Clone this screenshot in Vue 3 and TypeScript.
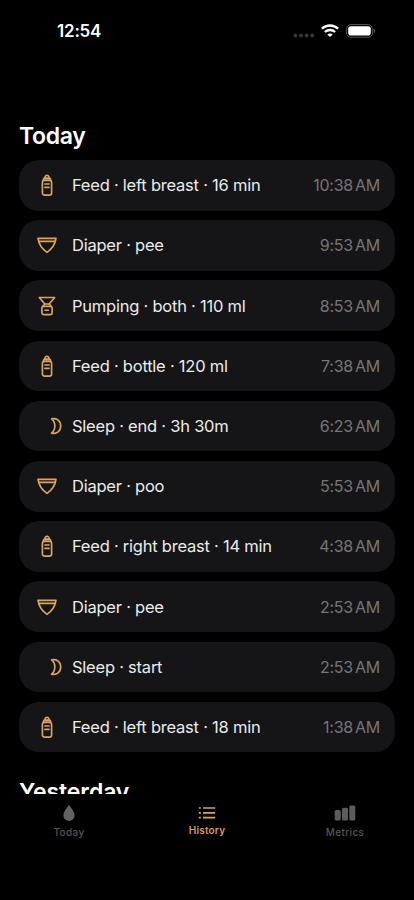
<script setup lang="ts">
type Kind = 'bottle' | 'diaper' | 'pump' | 'moon'

interface Entry {
  kind: Kind
  label: string
  time: string
}

const entries: Entry[] = [
  { kind: 'bottle', label: 'Feed · left breast · 16 min', time: '10:38 AM' },
  { kind: 'diaper', label: 'Diaper · pee', time: '9:53 AM' },
  { kind: 'pump', label: 'Pumping · both · 110 ml', time: '8:53 AM' },
  { kind: 'bottle', label: 'Feed · bottle · 120 ml', time: '7:38 AM' },
  { kind: 'moon', label: 'Sleep · end · 3h 30m', time: '6:23 AM' },
  { kind: 'diaper', label: 'Diaper · poo', time: '5:53 AM' },
  { kind: 'bottle', label: 'Feed · right breast · 14 min', time: '4:38 AM' },
  { kind: 'diaper', label: 'Diaper · pee', time: '2:53 AM' },
  { kind: 'moon', label: 'Sleep · start', time: '2:53 AM' },
  { kind: 'bottle', label: 'Feed · left breast · 18 min', time: '1:38 AM' },
]
</script>

<template>
  <div class="screen">
    <header class="status">
      <span class="clock">12:54</span>
      <div class="indicators">
        <svg class="dots" width="22" height="5" viewBox="0 0 22 5" fill="#38383a">
          <circle cx="2.4" cy="2.5" r="1.9" /><circle cx="8" cy="2.5" r="1.9" />
          <circle cx="13.6" cy="2.5" r="1.9" /><circle cx="19.2" cy="2.5" r="1.9" />
        </svg>
        <svg class="wifi" width="18" height="14" viewBox="0 0 18 14" fill="none" stroke="#fff" stroke-width="2.3">
          <path d="M0.9 4.7C5.4 0.4 12.6 0.4 17.1 4.7" />
          <path d="M3.9 8C6.8 5.3 11.2 5.3 14.1 8" />
          <path d="M9 13.1L6.3 10.5C7.8 9.1 10.2 9.1 11.7 10.5Z" fill="#fff" stroke="none" />
        </svg>
        <svg width="30" height="14" viewBox="0 0 30 14">
          <rect x="0.6" y="0.6" width="25.8" height="12.6" rx="4.2" fill="none" stroke="#59595b" />
          <rect x="2.2" y="2.2" width="22.6" height="9.4" rx="2.8" fill="#fff" />
          <path d="M27.7 4.8Q29.2 5.4 29.2 7T27.7 9.1Z" fill="#59595b" />
        </svg>
      </div>
    </header>

    <main class="history">
      <h1 class="day">Today</h1>
      <ul class="list">
        <li v-for="(entry, i) in entries" :key="i" class="card">
          <span class="icon" :class="{ shifted: entry.kind === 'moon' }">
            <svg v-if="entry.kind === 'bottle'" width="12" height="22" viewBox="0 0 12 22">
              <path d="M2.2 6.2Q2.2 4.2 4 3.4Q4.4 1.2 6 1.2T8 3.4Q9.8 4.2 9.8 6.2Z" />
              <path d="M3.8 4.1H8.2" />
              <rect x="1.4" y="6.3" width="9.2" height="14.8" rx="2.2" />
              <path d="M3.9 10H8.1M3.9 13.4H8.1" />
            </svg>
            <svg v-else-if="entry.kind === 'diaper'" width="20" height="18" viewBox="0 0 20 18">
              <path d="M1 2.4H19C18.2 8 15.4 12.6 10 16.4C4.6 12.6 1.8 8 1 2.4Z" />
              <path d="M1.8 5.4H18.2" />
            </svg>
            <svg v-else-if="entry.kind === 'pump'" width="18" height="20" viewBox="0 0 18 20">
              <path d="M1.3 1.5H16.7L11.2 8H6.8Z" />
              <path d="M6.8 8L4.8 10.3M11.2 8L13.2 10.3" />
              <rect x="3.9" y="10.4" width="10.2" height="8.2" rx="1.8" />
              <path d="M7 14.2H10.4" />
            </svg>
            <svg v-else width="12" height="18" viewBox="0 0 12 18">
              <path d="M1.6 1.9C6 .6 10.7 3.4 10.7 9S6 17.4 1.6 16.1C5.9 12.6 5.9 5.4 1.6 1.9Z" />
            </svg>
          </span>
          <span class="label">{{ entry.label }}</span>
          <time class="time">{{ entry.time }}</time>
        </li>
      </ul>
      <h1 class="day next">Yesterday</h1>
    </main>

    <nav class="tabs">
      <a class="tab">
        <svg width="14" height="18" viewBox="0 0 14 18" fill="#626262">
          <path d="M7 .8C9 4 12.6 7.6 12.6 11.4A5.6 5.6 0 0 1 1.4 11.4C1.4 7.6 5 4 7 .8Z" />
        </svg>
        <span>Today</span>
      </a>
      <a class="tab active">
        <svg width="18" height="18" viewBox="0 0 18 18" fill="none" stroke="#d8a45f" stroke-width="1.7">
          <path d="M.8 4H2.8M.8 8.8H2.8M.8 13.6H2.8M5 4H17.2M5 8.8H17.2M5 13.6H17.2" />
        </svg>
        <span>History</span>
      </a>
      <a class="tab">
        <svg width="22" height="18" viewBox="0 0 22 18" fill="#5c5c5c">
          <rect x=".7" y="6" width="6" height="10.4" rx="1.5" />
          <rect x="8" y="3.8" width="6" height="12.6" rx="1.5" />
          <rect x="15.3" y="1.4" width="6" height="15" rx="1.5" />
        </svg>
        <span>Metrics</span>
      </a>
    </nav>
  </div>
</template>

<style>
body {
  background: #000;
}
</style>

<style scoped>
.screen {
  width: 414px;
  height: 900px;
  display: flex;
  flex-direction: column;
  overflow: hidden;
  background: #000;
  color: #fff;
  font-family: Inter, 'Liberation Sans', sans-serif;
}
.status {
  box-sizing: border-box;
  height: 62px;
  flex: none;
  display: flex;
  justify-content: space-between;
  align-items: center;
  padding: 0 38px 0 57px;
}
.clock {
  font-size: 17px;
  font-weight: 600;
  letter-spacing: -0.2px;
}
.indicators {
  display: flex;
  align-items: center;
}
.dots {
  margin: 9px 6px 0 0;
}
.wifi {
  margin-right: 7px;
}
.history {
  height: 732px;
  flex: none;
  box-sizing: border-box;
  padding: 59px 19px 0;
  overflow: hidden;
}
.day {
  margin: 0;
  height: 39px;
  line-height: 31px;
  font-size: 23px;
  font-weight: 600;
  letter-spacing: -0.3px;
}
.next {
  margin-top: 25px;
  letter-spacing: -0.1px;
}
.list {
  list-style: none;
  margin: 0;
  padding: 0;
  display: flex;
  flex-direction: column;
  gap: 9.6px;
}
.card {
  box-sizing: border-box;
  height: 50.6px;
  display: flex;
  align-items: center;
  padding: 0 15px 0 14px;
  border-radius: 20px;
  background: #151517;
}
.icon {
  width: 27px;
  display: flex;
  justify-content: center;
  margin-right: 12px;
}
.icon svg {
  flex: none;
  fill: none;
  stroke: #d9a560;
  stroke-width: 1.65;
  stroke-linecap: round;
  stroke-linejoin: round;
}
.shifted {
  justify-content: flex-end;
  width: 29px;
  margin-right: 10px;
}
.label {
  flex: 1;
  font-size: 16.5px;
  letter-spacing: -0.23px;
  color: #ebebeb;
  white-space: nowrap;
}
.time {
  font-size: 16px;
  color: #767676;
  letter-spacing: -0.25px;
  word-spacing: -2.2px;
  white-space: nowrap;
}
.tabs {
  flex: 1;
  display: grid;
  grid-template-columns: repeat(3, 1fr);
  align-items: start;
  padding-top: 10px;
}
.tab {
  display: flex;
  flex-direction: column;
  align-items: center;
  gap: 4px;
  font-size: 10px;
  line-height: 13px;
  letter-spacing: 0.35px;
  color: #555;
  font-weight: 500;
}
.active {
  gap: 2px;
  letter-spacing: 0.2px;
  color: #d09d5b;
  font-weight: 600;
}
</style>
